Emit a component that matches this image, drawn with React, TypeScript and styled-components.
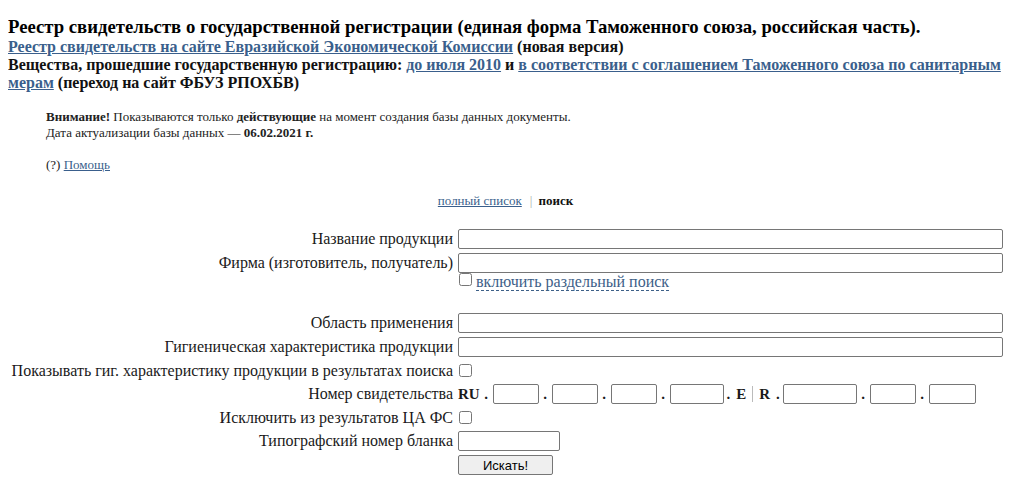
import React from "react";
import styled, { createGlobalStyle } from "styled-components";

const GlobalStyle = createGlobalStyle`
  body {
    margin: 8px;
    font-family: "Liberation Serif", "Times New Roman", serif;
    color: #111;
    background: #fff;
  }
`;

const Title = styled.div`
  margin: 8px 0 0;
  font-size: 18.72px;
  font-weight: bold;
  color: #000;
`;

const Lead = styled.div`
  font-size: 16px;
  font-weight: bold;
  color: #111;
`;

const Link = styled.a`
  color: #3a5f8c;
  text-decoration: underline;
  cursor: pointer;
`;

const Notice = styled.div`
  margin: 17px 0 0 38px;
  font-size: 13px;
  line-height: 16px;
  color: #222;

  p {
    margin: 0;
  }
  p + p {
    margin-top: 16px;
  }
`;

const Tabs = styled.div`
  margin-top: 20px;
  text-align: center;
  font-size: 13px;
  line-height: 15px;
`;

const TabDivider = styled.span`
  color: #aaa;
  margin: 0 6px 0 8px;
`;

const Current = styled.b`
  color: #111;
`;

const SearchForm = styled.form`
  margin-top: 21px;
  display: grid;
  grid-template-columns: 445px 1fr;
  column-gap: 5px;
  row-gap: 4px;
  font-size: 16px;
  color: #1a1a1a;
`;

const Label = styled.label<{ $tall?: boolean }>`
  text-align: right;
  line-height: ${(p) => (p.$tall ? "20px" : "19px")};
  white-space: nowrap;
`;

const Field = styled.div<{ $tall?: boolean }>`
  display: flex;
  flex-direction: column;
  align-items: flex-start;
  min-height: ${(p) => (p.$tall ? "20px" : "19px")};
  justify-content: center;
`;

const TextInput = styled.input<{ $w?: number }>`
  box-sizing: border-box;
  width: ${(p) => (p.$w ? `${p.$w}px` : "100%")};
  height: 20px;
  margin: 0;
  padding: 1px 3px;
  border: 1px solid #767676;
  border-radius: 2px;
  background: #fff;
  font: 13px Arial, sans-serif;
  flex: none;
`;

const Check = styled.input`
  width: 13px;
  height: 13px;
  margin: 0 4px 0 1px;
  flex: none;
`;

const OptionLine = styled.div`
  display: flex;
  align-items: flex-start;
  height: 18px;
`;

const DashedLink = styled.a`
  margin-top: 1px;
  color: #3d6088;
  text-decoration: none;
  border-bottom: 1px dashed #3d6088;
  line-height: 16px;
  cursor: pointer;
`;

const Spacer = styled.div`
  grid-column: 1 / -1;
  height: 14px;
`;

const NumberLine = styled.div`
  display: flex;
  align-items: center;
  height: 20px;
  font-size: 15px;
  font-weight: bold;
`;

const Sep = styled.span`
  width: 13px;
  text-align: center;
  flex: none;
`;

const MidSep = styled.span`
  width: 59px;
  flex: none;
  display: flex;
  justify-content: center;
  align-items: center;
  gap: 6px;
`;

const Pipe = styled.span`
  width: 1px;
  height: 16px;
  background: #bbb;
`;

const SubmitButton = styled.button`
  box-sizing: border-box;
  width: 95px;
  height: 20px;
  padding: 0;
  border: 1px solid #767676;
  border-radius: 2px;
  background: #efefef;
  font: 13px Arial, "Liberation Sans", sans-serif;
  color: #000;
`;

const plainRows = [
  { label: "Область применения" },
  { label: "Гигиеническая характеристика продукции" },
];

const numberParts = [46, 46, 46, 54];
const numberTail = [74, 46, 47];

export default function App() {
  return (
    <>
      <GlobalStyle />
      <header>
        <Title>
          Реестр свидетельств о государственной регистрации (единая форма
          Таможенного союза, российская часть).
        </Title>
        <Lead>
          <Link>Реестр свидетельств на сайте Евразийской Экономической Комиссии</Link>{" "}
          (новая версия)
          <br />
          Вещества, прошедшие государственную регистрацию: <Link>до июля 2010</Link> и{" "}
          <Link>в соответствии с соглашением Таможенного союза по санитарным мерам</Link>{" "}
          (переход на сайт ФБУЗ РПОХБВ)
        </Lead>
      </header>

      <Notice>
        <p>
          <b>Внимание!</b> Показываются только <b>действующие</b> на момент создания
          базы данных документы.
          <br />
          Дата актуализации базы данных — <b>06.02.2021 г.</b>
        </p>
        <p>
          (?) <Link>Помощь</Link>
        </p>
      </Notice>

      <Tabs>
        <Link>полный список</Link>
        <TabDivider>|</TabDivider>
        <Current>поиск</Current>
      </Tabs>

      <SearchForm onSubmit={(e) => e.preventDefault()}>
        <Label $tall>Название продукции</Label>
        <Field $tall>
          <TextInput type="text" />
        </Field>

        <Label $tall>Фирма (изготовитель, получатель)</Label>
        <Field $tall>
          <TextInput type="text" />
          <OptionLine>
            <Check type="checkbox" />
            <DashedLink>включить раздельный поиск</DashedLink>
          </OptionLine>
        </Field>

        <Spacer />

        {plainRows.map((r) => (
          <React.Fragment key={r.label}>
            <Label $tall>{r.label}</Label>
            <Field $tall>
              <TextInput type="text" />
            </Field>
          </React.Fragment>
        ))}

        <Label>Показывать гиг. характеристику продукции в результатах поиска</Label>
        <Field>
          <Check type="checkbox" />
        </Field>

        <Label $tall>Номер свидетельства</Label>
        <NumberLine>
          RU
          {numberParts.map((w, i) => (
            <React.Fragment key={"a" + i}>
              <Sep>.</Sep>
              <TextInput type="text" $w={w} />
            </React.Fragment>
          ))}
          <MidSep>
            <span>.</span>
            <span>E</span>
            <Pipe />
            <span>R</span>
            <span>.</span>
          </MidSep>
          {numberTail.map((w, i) => (
            <React.Fragment key={"b" + i}>
              {i > 0 && <Sep>.</Sep>}
              <TextInput type="text" $w={w} />
            </React.Fragment>
          ))}
        </NumberLine>

        <Label>Исключить из результатов ЦА ФС</Label>
        <Field>
          <Check type="checkbox" />
        </Field>

        <Label $tall>Типографский номер бланка</Label>
        <Field $tall>
          <TextInput type="text" $w={102} />
        </Field>

        <span />
        <Field $tall>
          <SubmitButton type="submit">Искать!</SubmitButton>
        </Field>
      </SearchForm>
    </>
  );
}
